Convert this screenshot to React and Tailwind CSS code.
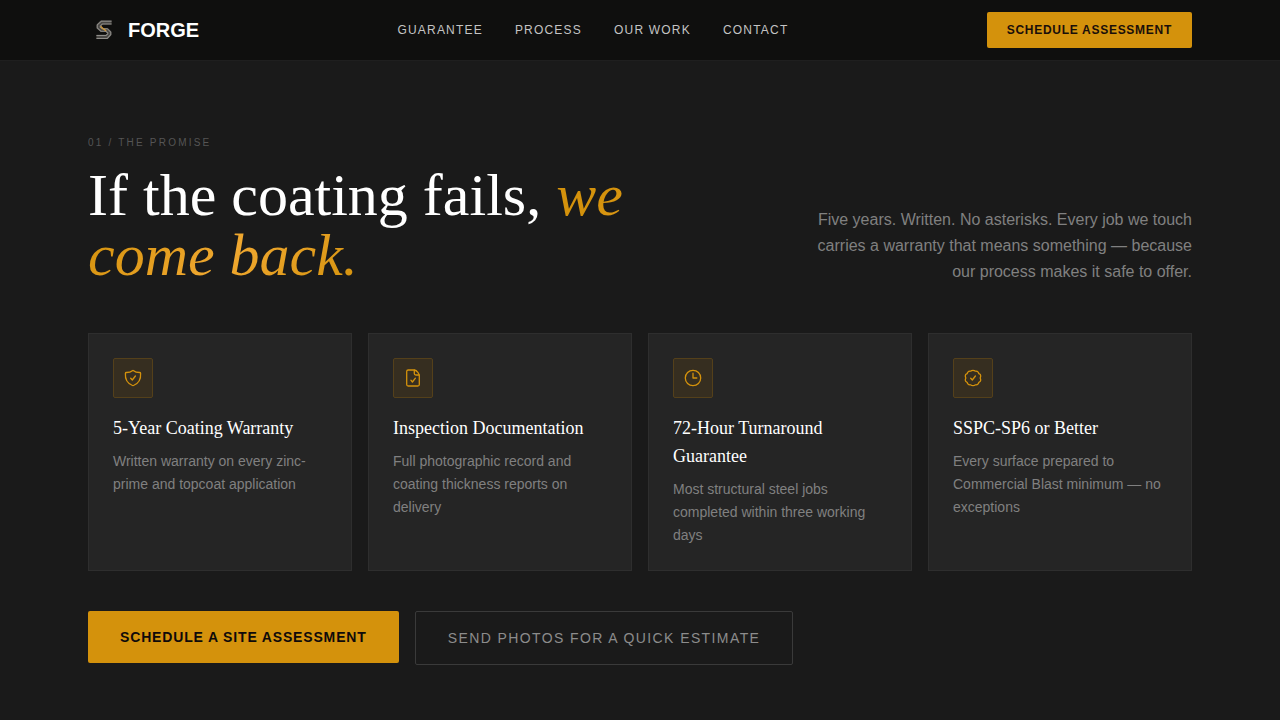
const links = [
  { label: 'Guarantee', href: '#guarantee' },
  { label: 'Process', href: '#process' },
  { label: 'Our Work', href: '#work' },
  { label: 'Contact', href: '#contact' },
];

function Icon({ children }) {
  return (
    <svg
      viewBox="0 0 20 20"
      className="w-5 h-5"
      fill="none"
      stroke="currentColor"
      strokeWidth="1.3"
      strokeLinecap="round"
      strokeLinejoin="round"
      aria-hidden="true"
    >
      {children}
    </svg>
  );
}

const ShieldIcon = () => (
  <Icon>
    <path d="M9.4 2.7Q10 2.2 10.6 2.7C12.1 4 14.2 4.5 16.6 4.5Q17.5 4.5 17.6 5.4C18 10.6 16.2 15.2 10.5 17.500Q10 17.700 9.500 17.500C3.800 15.200 2 10.600 2.400 5.400Q2.500 4.500 3.400 4.500C5.800 4.500 7.900 4 9.400 2.700Z" />
    <path d="M7.700 10.300 9.300 12 12.400 8" />
  </Icon>
);

const DocumentIcon = () => (
  <Icon>
    <path d="M11.500 2H5.200A1.500 1.500 0 0 0 3.700 3.500V16.500A1.500 1.500 0 0 0 5.200 18H14.800A1.500 1.500 0 0 0 16.300 16.500V7.500C16.300 6 14 2.500 11.500 2Z" />
    <path d="M11.300 2.200V5.500A1.500 1.500 0 0 0 12.800 7H16.200" />
    <path d="M7.900 12.200 9.400 14 12.400 10.200" />
  </Icon>
);

const ClockIcon = () => (
  <Icon>
    <circle cx="10" cy="10" r="7.700" />
    <path d="M10 5.200V10H13.800" />
  </Icon>
);

const BadgeIcon = () => (
  <Icon>
    <path d="M10 2.300Q11.500 2.300 12.200 3.200 14.200 2.900 14.900 3.900 15.500 4.500 15.900 5.700 17.700 6.300 17.700 7.700 17.700 8.800 17.200 10 17.700 11.200 17.700 12.300 17.700 13.700 15.900 14.300 15.500 15.500 14.900 16.100 14.200 17.100 12.200 16.800 11.500 17.700 10 17.700 8.500 17.700 7.800 16.800 5.800 17.100 5.100 16.100 4.500 15.500 4.100 14.300 2.300 13.700 2.300 12.300 2.300 11.200 2.800 10 2.300 8.800 2.300 7.700 2.300 6.300 4.100 5.700 4.500 4.500 5.100 3.900 5.800 2.900 7.800 3.200 8.500 2.300 10 2.300Z" />
    <path d="M7.700 10.300 9.300 12 12.400 8" />
  </Icon>
);

const promises = [
  {
    icon: ShieldIcon,
    title: '5-Year Coating Warranty',
    desc: 'Written warranty on every zinc-prime and topcoat application',
  },
  {
    icon: DocumentIcon,
    title: 'Inspection Documentation',
    desc: 'Full photographic record and coating thickness reports on delivery',
  },
  {
    icon: ClockIcon,
    title: '72-Hour Turnaround Guarantee',
    desc: 'Most structural steel jobs completed within three working days',
  },
  {
    icon: BadgeIcon,
    title: 'SSPC-SP6 or Better',
    desc: 'Every surface prepared to Commercial Blast minimum — no exceptions',
  },
];

function Logo() {
  return (
    <svg viewBox="-3 -3 38 38" className="w-8 h-8" fill="none" aria-hidden="true">
      <g strokeLinejoin="round">
        <path d="M25 7H13L9.500 10.500V13L13 16H19.500L22.500 19V21L19.500 24H7" stroke="#4a4845" strokeWidth="5" />
        <path d="M25 5.500H13L8 10V13.500L12.500 17.500H19" stroke="#8f8d89" strokeWidth="1.200" />
        <path d="M25 9H14L11.500 11.300V12.500L14 14.500H20L24 18.500V21.500L20 26H7" stroke="#8f8d89" strokeWidth="1.200" />
        <path d="M7 22.500H18.500L20.500 20.500V19.500L18 17.500" stroke="#8f8d89" strokeWidth="1.200" />
        <path d="M12 11.500 15 14.500 18.500 17" stroke="#c9953c" strokeWidth="1.800" />
      </g>
    </svg>
  );
}

function Navbar() {
  return (
    <header className="bg-[#0f0f0e] border-b border-[#1f1f1f]">
      <div className="max-w-6xl mx-auto px-6 py-3 flex items-center justify-between">
        <a href="#top" className="flex items-center gap-2">
          <Logo />
          <span className="text-xl font-bold text-white">FORGE</span>
        </a>
        <nav className="flex items-center gap-8">
          {links.map((l) => (
            <a key={l.label} href={l.href} className="text-xs tracking-widest uppercase text-[#c4c4c4] hover:text-white">
              {l.label}
            </a>
          ))}
        </nav>
        <button
          type="button"
          className="px-5 py-2.5 rounded-xs bg-[#d4920c] text-[#1a0f0a] text-xs font-bold tracking-[0.06em] uppercase"
        >
          Schedule Assessment
        </button>
      </div>
    </header>
  );
}

export default function App() {
  return (
    <div id="top" className="min-h-screen bg-[#1a1a1a] font-['Liberation_Sans',Arial,sans-serif]">
      <Navbar />

      <main id="guarantee" className="max-w-6xl mx-auto px-6 pt-18 pb-14">
        <div className="flex items-end justify-between mb-12">
          <div className="max-w-xl">
            <p className="text-[10px] leading-5 tracking-[0.22em] uppercase text-[#555555] mb-3">01 / The Promise</p>
            <h1 className="font-['Liberation_Serif','Times_New_Roman',serif] text-6xl leading-[60px] text-white">
              If the coating fails,{' '}
              <em className="bg-linear-[135deg,#d4920c_20%,#f0a830_60%,#d4920c] bg-clip-text text-transparent">
                we come back.
              </em>
            </h1>
          </div>
          <p className="max-w-sm text-base leading-[26px] text-right text-[#808080]">
            Five years. Written. No asterisks. Every job we touch carries a warranty that means something — because our
            process makes it safe to offer.
          </p>
        </div>

        <div className="grid grid-cols-4 gap-4 mb-10">
          {promises.map((p) => (
            <article key={p.title} className="bg-[#252525] border border-[#2e2e2e] p-6">
              <div className="w-10 h-10 mb-4 rounded-xs flex items-center justify-center bg-[#362e20] border border-[#54401a] text-[#d4920c]">
                <p.icon />
              </div>
              <h2 className="font-['Liberation_Serif','Times_New_Roman',serif] text-lg leading-7 text-white mb-2">
                {p.title}
              </h2>
              <p className="text-sm leading-relaxed text-[#808080]">{p.desc}</p>
            </article>
          ))}
        </div>

        <div className="flex items-start gap-4">
          <button
            type="button"
            className="px-8 py-4 rounded-xs bg-[#d4920c] text-[#0f0a0a] text-sm font-bold tracking-[0.06em] uppercase"
          >
            Schedule a Site Assessment
          </button>
          <button
            type="button"
            className="px-8 py-4 rounded-xs border border-[#3a3a3a] text-[#8c8c8c] text-sm tracking-widest uppercase"
          >
            Send Photos for a Quick Estimate
          </button>
        </div>
      </main>
    </div>
  );
}
